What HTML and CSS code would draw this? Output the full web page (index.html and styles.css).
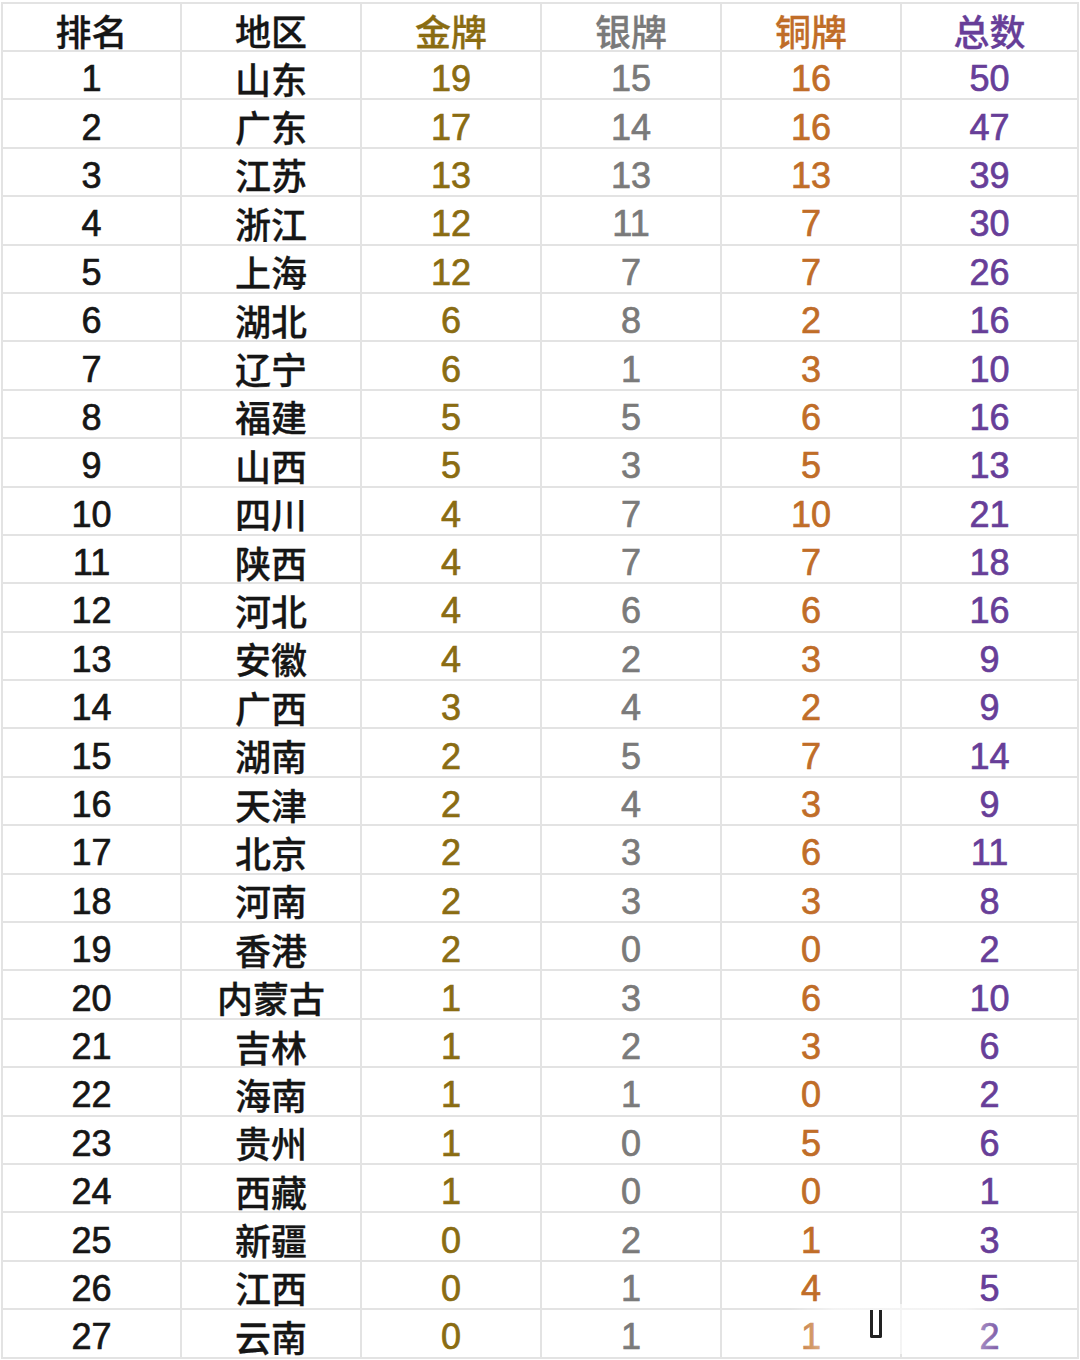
FILE: index.html
```html
<!DOCTYPE html>
<html lang="zh">
<head>
<meta charset="utf-8">
<link rel="stylesheet" href="styles.css">
</head>
<body>
<div class="sheet">
<table class="medals">
<colgroup><col class="col-first"><col class="col-mid"><col class="col-mid"><col class="col-mid"><col class="col-mid"><col class="col-last"></colgroup>
<thead>
<tr><th class="c-rank">排名</th><th class="c-region">地区</th><th class="c-gold">金牌</th><th class="c-silver">银牌</th><th class="c-bronze">铜牌</th><th class="c-total">总数</th></tr>
</thead>
<tbody>
<tr><td class="c-rank">1</td><td class="c-region">山东</td><td class="c-gold">19</td><td class="c-silver">15</td><td class="c-bronze">16</td><td class="c-total">50</td></tr>
<tr><td class="c-rank">2</td><td class="c-region">广东</td><td class="c-gold">17</td><td class="c-silver">14</td><td class="c-bronze">16</td><td class="c-total">47</td></tr>
<tr><td class="c-rank">3</td><td class="c-region">江苏</td><td class="c-gold">13</td><td class="c-silver">13</td><td class="c-bronze">13</td><td class="c-total">39</td></tr>
<tr><td class="c-rank">4</td><td class="c-region">浙江</td><td class="c-gold">12</td><td class="c-silver">11</td><td class="c-bronze">7</td><td class="c-total">30</td></tr>
<tr><td class="c-rank">5</td><td class="c-region">上海</td><td class="c-gold">12</td><td class="c-silver">7</td><td class="c-bronze">7</td><td class="c-total">26</td></tr>
<tr><td class="c-rank">6</td><td class="c-region">湖北</td><td class="c-gold">6</td><td class="c-silver">8</td><td class="c-bronze">2</td><td class="c-total">16</td></tr>
<tr><td class="c-rank">7</td><td class="c-region">辽宁</td><td class="c-gold">6</td><td class="c-silver">1</td><td class="c-bronze">3</td><td class="c-total">10</td></tr>
<tr><td class="c-rank">8</td><td class="c-region">福建</td><td class="c-gold">5</td><td class="c-silver">5</td><td class="c-bronze">6</td><td class="c-total">16</td></tr>
<tr><td class="c-rank">9</td><td class="c-region">山西</td><td class="c-gold">5</td><td class="c-silver">3</td><td class="c-bronze">5</td><td class="c-total">13</td></tr>
<tr><td class="c-rank">10</td><td class="c-region">四川</td><td class="c-gold">4</td><td class="c-silver">7</td><td class="c-bronze">10</td><td class="c-total">21</td></tr>
<tr><td class="c-rank">11</td><td class="c-region">陕西</td><td class="c-gold">4</td><td class="c-silver">7</td><td class="c-bronze">7</td><td class="c-total">18</td></tr>
<tr><td class="c-rank">12</td><td class="c-region">河北</td><td class="c-gold">4</td><td class="c-silver">6</td><td class="c-bronze">6</td><td class="c-total">16</td></tr>
<tr><td class="c-rank">13</td><td class="c-region">安徽</td><td class="c-gold">4</td><td class="c-silver">2</td><td class="c-bronze">3</td><td class="c-total">9</td></tr>
<tr><td class="c-rank">14</td><td class="c-region">广西</td><td class="c-gold">3</td><td class="c-silver">4</td><td class="c-bronze">2</td><td class="c-total">9</td></tr>
<tr><td class="c-rank">15</td><td class="c-region">湖南</td><td class="c-gold">2</td><td class="c-silver">5</td><td class="c-bronze">7</td><td class="c-total">14</td></tr>
<tr><td class="c-rank">16</td><td class="c-region">天津</td><td class="c-gold">2</td><td class="c-silver">4</td><td class="c-bronze">3</td><td class="c-total">9</td></tr>
<tr><td class="c-rank">17</td><td class="c-region">北京</td><td class="c-gold">2</td><td class="c-silver">3</td><td class="c-bronze">6</td><td class="c-total">11</td></tr>
<tr><td class="c-rank">18</td><td class="c-region">河南</td><td class="c-gold">2</td><td class="c-silver">3</td><td class="c-bronze">3</td><td class="c-total">8</td></tr>
<tr><td class="c-rank">19</td><td class="c-region">香港</td><td class="c-gold">2</td><td class="c-silver">0</td><td class="c-bronze">0</td><td class="c-total">2</td></tr>
<tr><td class="c-rank">20</td><td class="c-region">内蒙古</td><td class="c-gold">1</td><td class="c-silver">3</td><td class="c-bronze">6</td><td class="c-total">10</td></tr>
<tr><td class="c-rank">21</td><td class="c-region">吉林</td><td class="c-gold">1</td><td class="c-silver">2</td><td class="c-bronze">3</td><td class="c-total">6</td></tr>
<tr><td class="c-rank">22</td><td class="c-region">海南</td><td class="c-gold">1</td><td class="c-silver">1</td><td class="c-bronze">0</td><td class="c-total">2</td></tr>
<tr><td class="c-rank">23</td><td class="c-region">贵州</td><td class="c-gold">1</td><td class="c-silver">0</td><td class="c-bronze">5</td><td class="c-total">6</td></tr>
<tr><td class="c-rank">24</td><td class="c-region">西藏</td><td class="c-gold">1</td><td class="c-silver">0</td><td class="c-bronze">0</td><td class="c-total">1</td></tr>
<tr><td class="c-rank">25</td><td class="c-region">新疆</td><td class="c-gold">0</td><td class="c-silver">2</td><td class="c-bronze">1</td><td class="c-total">3</td></tr>
<tr><td class="c-rank">26</td><td class="c-region">江西</td><td class="c-gold">0</td><td class="c-silver">1</td><td class="c-bronze">4</td><td class="c-total">5</td></tr>
<tr><td class="c-rank">27</td><td class="c-region">云南</td><td class="c-gold">0</td><td class="c-silver">1</td><td class="c-bronze">1</td><td class="c-total">2</td></tr>
</tbody>
</table>
<div class="watermark"><span class="wm-mark"></span></div>
</div>
</body>
</html>
```
FILE: styles.css
```css
html, body {
  margin: 0;
  padding: 0;
  background: #ffffff;
}
body {
  width: 1080px;
  height: 1360px;
  overflow: hidden;
}
.sheet {
  position: relative;
  padding: 2px 0 0 1px;
}
.medals {
  border-collapse: collapse;
  table-layout: fixed;
  width: 1076px;
  font-family: "Liberation Sans", "Noto Sans CJK SC", sans-serif;
  font-size: 36px;
  -webkit-text-stroke: 0.7px currentColor;
}
.col-first { width: 179px; }
.col-mid { width: 180px; }
.col-last { width: 177px; }
.medals th,
.medals td {
  border: 2px solid #e3e3e3;
  text-align: center;
  vertical-align: middle;
  padding: 8px 0 0 0;
  height: 38.4px;
  line-height: 38px;
  font-weight: normal;
}
.medals th {
  height: 41px;
  padding-top: 5px;
  font-family: "Noto Sans CJK SC", sans-serif;
  font-weight: 500;
  font-size: 36px;
  -webkit-text-stroke: 0.3px currentColor;
}
.medals td.c-region {
  font-family: "Noto Sans CJK SC", sans-serif;
  font-weight: 500;
  font-size: 36px;
  -webkit-text-stroke: 0.3px currentColor;
  padding-top: 5px;
  height: 41.4px;
}
.c-rank, .c-region { color: #161616; }
.c-gold { color: #8a6c12; }
.c-silver { color: #7a7a7a; }
.c-bronze { color: #c06d28; }
.c-total { color: #673e98; }

.watermark {
  position: absolute;
  left: 790px;
  top: 1304px;
  width: 220px;
  height: 50px;
  background: linear-gradient(90deg, rgba(255,255,255,0) 0%, rgba(255,255,255,0.6) 20%, rgba(255,255,255,0.6) 80%, rgba(255,255,255,0) 100%);
}
.wm-mark {
  position: absolute;
  left: 80px;
  top: 6px;
  width: 12px;
  height: 28px;
  border: 3px solid #222;
  border-top: none;
  border-radius: 0 0 2px 2px;
  box-sizing: border-box;
}
```
